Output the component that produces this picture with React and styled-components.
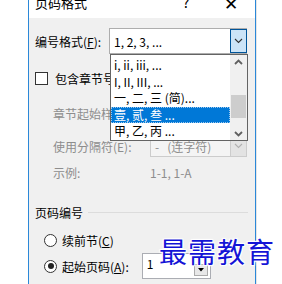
import React from 'react'
import styled, {createGlobalStyle} from 'styled-components'

const Global = createGlobalStyle`
html,body{margin:0;padding:0;background:#fff;overflow:hidden;}
body{font-family:"Noto Sans CJK SC","Liberation Sans",sans-serif;}
`

const Page = styled.div`
width:282px;
height:284px;
position:relative;
overflow:hidden;
`
const Dialog = styled.div`
margin-left:28px;
margin-top:-14px;
width:226px;
height:300px;
border-left:1px solid #2b88d8;
border-right:1px solid #2b88d8;
box-shadow:1px 0 0 #e6e6e6;
display:flex;
flex-direction:column;
background:#f0f0f0;
`
const TitleBar = styled.div`
height:32px;
background:#fff;
display:flex;
align-items:center;
padding-left:6px;
font-size:13px;
color:#000;
.title{flex:1;}
.help{width:30px;text-align:center;margin-right:15px;font-size:14px;}
.close{width:30px;text-align:center;font-size:17px;margin-right:9px;}
`
const Body = styled.div`
display:flex;
flex-direction:column;
padding:10px 8px 0 6px;
font-size:12px;
color:#000;
`
const Row = styled.div`
display:flex;
align-items:center;
height:${p=>p.$h||20}px;
margin-top:${p=>p.$mt||0}px;
padding-left:${p=>p.$indent||0}px;
color:${p=>p.$disabled?'#8d8d8d':'#000'};
white-space:nowrap;
position:relative;
`
const Label = styled.span`
width:${p=>p.$w}px;
flex-shrink:0;
`
const Combo = styled.div`
position:relative;
width:${p=>p.$w}px;
height:${p=>p.$h}px;
box-sizing:border-box;
border:1px solid ${p=>p.$disabled?'#cccccc':'#adadad'};
border-right:none;
background:${p=>p.$disabled?'#f4f4f4':'#fff'};
display:flex;
align-items:center;
padding-left:4px;
color:${p=>p.$disabled?'#8d8d8d':'#000'};
`
const ComboButton = styled.div`
position:absolute;
right:0;
top:${p=>p.$disabled?-1:0}px;
bottom:${p=>p.$disabled?-1:0}px;
width:17px;
box-sizing:border-box;
background:${p=>p.$disabled?'#e3e3e3':'#cce4f7'};
border:1px solid ${p=>p.$disabled?'#cccccc':'#005499'};
display:flex;
align-items:center;
justify-content:center;
`
const DropList = styled.div`
position:absolute;
left:0;
top:25px;
width:138px;
height:87px;
box-sizing:border-box;
border:1px solid #646464;
background:#fff;
display:flex;
z-index:5;
`
const Items = styled.div`
flex:1;
padding-top:2px;
`
const Item = styled.div`
height:16.5px;
line-height:16.5px;
padding-left:3px;
font-size:12px;
color:${p=>p.$active?'#fff':'#000'};
background:${p=>p.$active?'#0078d7':'transparent'};
outline:${p=>p.$active?'1px dotted #9cc8ef':'none'};
outline-offset:-1px;
white-space:nowrap;
`
const ScrollBar = styled.div`
width:17px;
background:#f0f0f0;
position:relative;
display:flex;
flex-direction:column;
justify-content:space-between;
align-items:center;
padding:4px 0 3px;
box-sizing:border-box;
.thumb{position:absolute;left:1px;right:1px;top:40px;height:23px;background:#cdcdcd;}
`
const Box = styled.span`
width:11px;
height:11px;
border:1px solid #333;
background:#fff;
margin-right:7px;
flex-shrink:0;
`
const Radio = styled.span`
width:11px;
height:11px;
border:1px solid #333;
border-radius:50%;
background:#fff;
margin-right:5px;
display:flex;
align-items:center;
justify-content:center;
flex-shrink:0;
&::after{
  content:'';
  width:6px;
  height:6px;
  border-radius:50%;
  background:${p=>p.$checked?'#222':'transparent'};
}
`
const Section = styled.div`
display:flex;
align-items:center;
height:20px;
margin-top:20px;
&::after{
  content:'';
  flex:1;
  height:1px;
  background:#dcdcdc;
  margin-left:5px;
  margin-right:-1px;
}
`
const Spin = styled.div`
position:relative;
margin-left:13px;
width:69px;
height:26px;
box-sizing:border-box;
border:1px solid #abadb3;
background:#fff;
padding:2px 0 0 4px;
line-height:16px;
align-self:flex-start;
.btn{
  position:absolute;
  right:2px;
  top:10px;
  width:14px;
  height:12px;
  box-sizing:border-box;
  border:1px solid #acacac;
  background:#e8e8e8;
  display:flex;
  align-items:center;
  justify-content:center;
}
`
const Watermark = styled.div`
position:absolute;
left:159px;
top:237px;
font-size:28px;
line-height:1;
letter-spacing:1px;
color:#1414d6;
font-family:"Noto Sans CJK SC",serif;
text-shadow:0 0 2px #fff,0 0 2px #fff,1px 1px 1px #fff,-1px -1px 1px #fff,1px -1px 1px #fff,-1px 1px 1px #fff;
z-index:10;
`

const Chevron = ({color='#333',up})=>(
  <svg width="9" height="6" viewBox="0 0 9 6">
    <polyline points={up?'1,5 4.5,1.5 8,5':'1,1 4.5,4.5 8,1'} fill="none" stroke={color} strokeWidth={up!==undefined?1.8:1.1}/>
  </svg>
)

export default function App(){
  return(
    <Page>
      <Global/>
      <Dialog>
        <TitleBar>
          <span className='title'>页码格式</span>
          <span className='help'>?</span>
          <span className='close'>✕</span>
        </TitleBar>
        <Body>
          <Row $h={26}>
            <Label $w={74}>编号格式(<u>F</u>):</Label>
            <Combo $w={138} $h={26}>
              1, 2, 3, ...
              <ComboButton><Chevron/></ComboButton>
              <DropList>
                <Items>
                  <Item>i, ii, iii, ...</Item>
                  <Item>I, II, III, ...</Item>
                  <Item>一, 二, 三 (简)...</Item>
                  <Item $active>壹, 贰, 叁 ...</Item>
                  <Item>甲, 乙, 丙 ...</Item>
                </Items>
                <ScrollBar>
                  <Chevron up={true} color='#606060'/>
                  <div className='thumb'/>
                  <Chevron up={false} color='#606060'/>
                </ScrollBar>
              </DropList>
            </Combo>
          </Row>
          <Row $mt={14}>
            <Box/>包含章节号
          </Row>
          <Row $mt={15} $indent={18} $disabled>章节起始样式</Row>
          <Row $mt={12} $h={22} $indent={18} $disabled>
            <Label $w={97}>使用分隔符(E):</Label>
            <Combo $w={97} $h={21} $disabled>
              -&nbsp;&nbsp;&nbsp;(连字符)
              <ComboButton $disabled><Chevron color='#b0b0b0'/></ComboButton>
            </Combo>
          </Row>
          <Row $mt={5} $indent={18} $disabled>
            <Label $w={97}>示例:</Label>1-1, 1-A
          </Row>
          <Section>页码编号</Section>
          <Row $mt={8} $indent={9}>
            <Radio/>续前节(<u>C</u>)
          </Row>
          <Row $mt={3} $h={26} $indent={9}>
            <Radio $checked/>起始页码(<u>A</u>):
            <Spin>
              1
              <span className='btn'>
                <svg width="6" height="4" viewBox="0 0 6 4"><polygon points="0,0 6,0 3,3.5" fill="#000"/></svg>
              </span>
            </Spin>
          </Row>
        </Body>
      </Dialog>
      <Watermark>最需教育</Watermark>
    </Page>
  )
}
